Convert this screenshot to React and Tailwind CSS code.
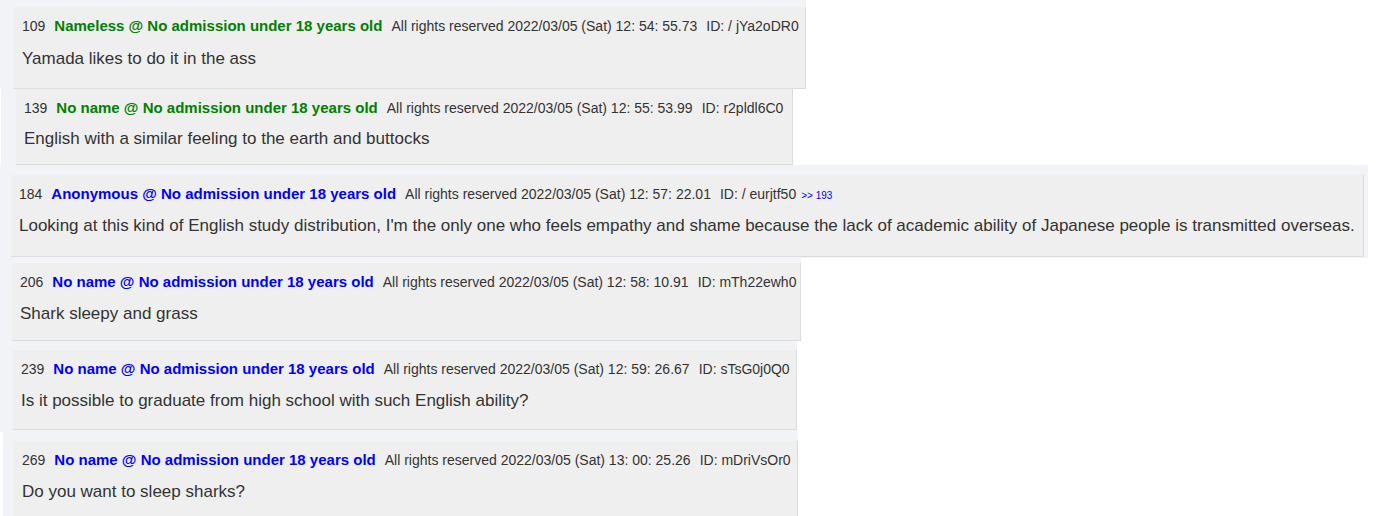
const posts = [
  {
    no: 109,
    name: 'Nameless @ No admission under 18 years old',
    color: 'text-[#008000]',
    date: '2022/03/05 (Sat) 12: 54: 55.73',
    id: 'ID: / jYa2oDR0',
    body: 'Yamada likes to do it in the ass',
    strip: 'w-[806px] pl-[14px] pt-[7px]',
    box: 'h-[82px]',
    gap: 'mt-[11px]',
  },
  {
    no: 139,
    name: 'No name @ No admission under 18 years old',
    color: 'text-[#008000]',
    date: '2022/03/05 (Sat) 12: 55: 53.99',
    id: 'ID: r2pldl6C0',
    body: 'English with a similar feeling to the earth and buttocks',
    strip: 'w-[792px] ml-[1px] pl-[15px]',
    box: 'h-[76px]',
    gap: 'mt-[9px]',
  },
  {
    no: 184,
    name: 'Anonymous @ No admission under 18 years old',
    color: 'text-[#0000ff]',
    date: '2022/03/05 (Sat) 12: 57: 22.01',
    id: 'ID: / eurjtf50',
    reply: '>> 193',
    body: "Looking at this kind of English study distribution, I'm the only one who feels empathy and shame because the lack of academic ability of Japanese people is transmitted overseas.",
    strip: 'w-[1368px] pl-[11px] pt-[10px] pr-[4px] pb-[1px]',
    box: 'h-[82px]',
    gap: 'mt-[10px]',
  },
  {
    no: 206,
    name: 'No name @ No admission under 18 years old',
    color: 'text-[#0000ff]',
    date: '2022/03/05 (Sat) 12: 58: 10.91',
    id: 'ID: mTh22ewh0',
    body: 'Shark sleepy and grass',
    strip: 'w-[801px] pl-[12px] pt-[5px]',
    box: 'h-[78px]',
    gap: 'mt-[10px]',
  },
  {
    no: 239,
    name: 'No name @ No admission under 18 years old',
    color: 'text-[#0000ff]',
    date: '2022/03/05 (Sat) 12: 59: 26.67',
    id: 'ID: sTsG0j0Q0',
    body: 'Is it possible to graduate from high school with such English ability?',
    strip: 'w-[797px] pl-[13px] pt-[9px] pb-[2px]',
    box: 'h-[80px]',
    gap: 'mt-[10px]',
  },
  {
    no: 269,
    name: 'No name @ No admission under 18 years old',
    color: 'text-[#0000ff]',
    date: '2022/03/05 (Sat) 13: 00: 25.26',
    id: 'ID: mDriVsOr0',
    body: 'Do you want to sleep sharks?',
    strip: 'w-[795px] ml-[3px] pl-[11px] pt-[9px]',
    box: 'h-[80px]',
    gap: 'mt-[10px]',
  },
];

function Post({ post }) {
  return (
    <div className={`bg-[#f2f3f7] ${post.strip}`}>
      <div className={`bg-[#efefef] border-r border-b border-[#dcdcdc] pl-[8px] pt-[9px] ${post.box}`}>
        <div className="h-[20px] leading-[20px] whitespace-nowrap text-[14px] text-[#333]">
          <span>{post.no}</span>
          <span className={`ml-[9px] font-bold text-[15px] ${post.color}`}>{post.name}</span>
          <span className="ml-[9px]">All rights reserved {post.date}</span>
          <span className="ml-[9px]">{post.id}</span>
          {post.reply && (
            <span className="ml-[5px] text-[10px] text-[#0000ff]">{post.reply}</span>
          )}
        </div>
        <div className={`h-[24px] leading-[24px] whitespace-nowrap text-[17px] text-[#333] ${post.gap}`}>
          {post.body}
        </div>
      </div>
    </div>
  );
}

export default function App() {
  return (
    <div className="w-[1390px] h-[516px] overflow-hidden bg-white font-['Liberation_Sans',Arial,sans-serif]">
      {posts.map((post) => (
        <Post key={post.no} post={post} />
      ))}
    </div>
  );
}
